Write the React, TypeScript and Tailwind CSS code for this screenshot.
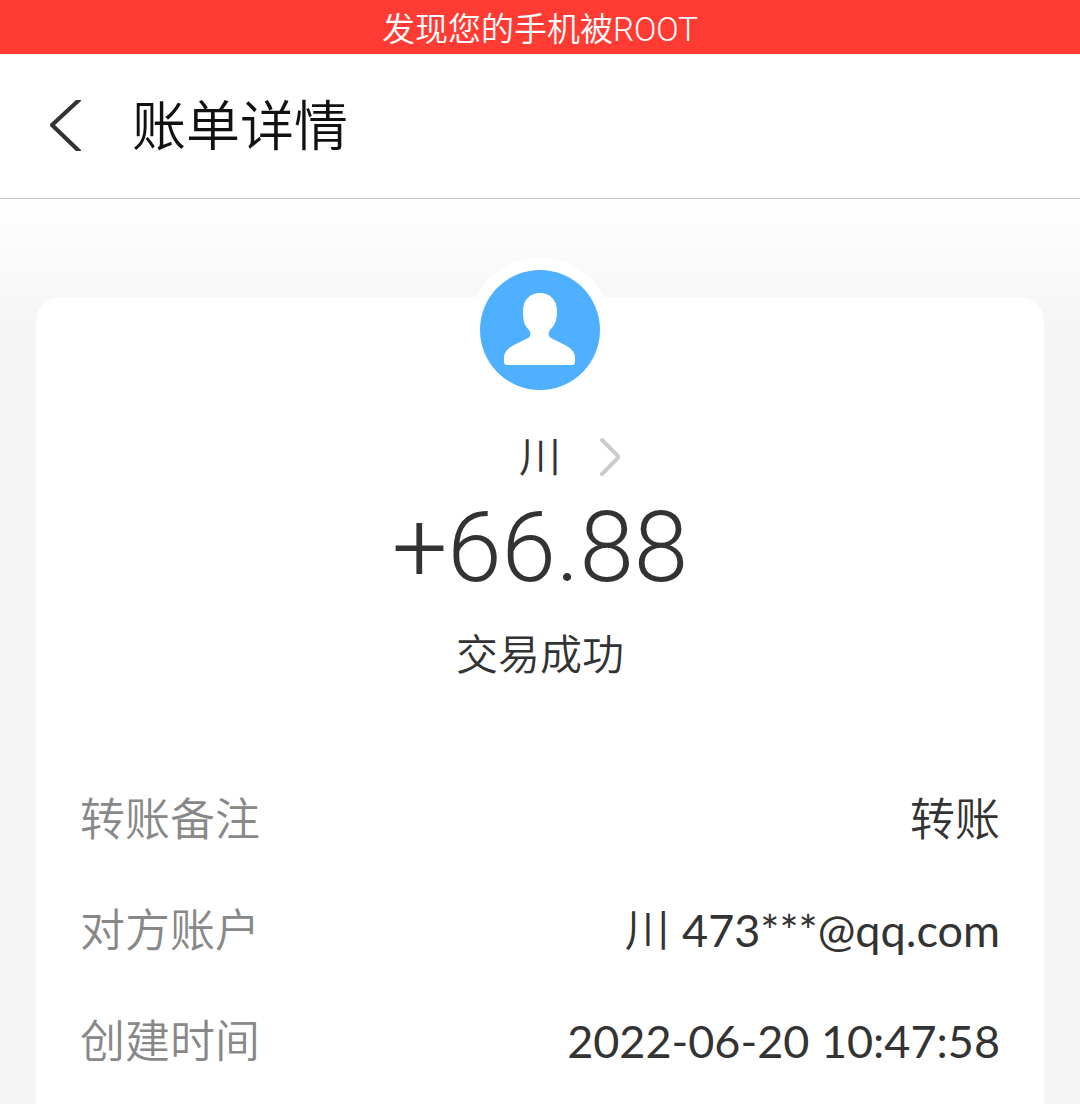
import type { ReactNode } from "react";

function DetailRow({ label, children }: { label: string; children: ReactNode }) {
  return (
    <div className="flex h-[111px] items-center justify-between">
      <dt className="text-[#888888]">{label}</dt>
      <dd className="text-[#333333]">{children}</dd>
    </div>
  );
}

export default function App() {
  return (
    <div className="flex min-h-screen flex-col bg-[#f5f5f5] font-['Roboto','Noto_Sans_CJK_SC',sans-serif] font-[350]">
      {/* Warning bar */}
      <div className="flex h-[54px] items-center justify-center bg-[#ff3b34] pt-1">
        <p className="text-[33px] leading-none text-white">发现您的手机被ROOT</p>
      </div>

      {/* Title bar */}
      <header className="flex h-[145px] items-center border-b border-[#c8c8c8] bg-white px-12">
        <button type="button" aria-label="返回">
          <svg width="36" height="56" viewBox="0 0 36 56">
            <path fill="#333333" d="M28 2h5v1L7 27l26 25v1h-5L2 28v-2z" />
          </svg>
        </button>
        <h1 className="ml-12 pt-1 text-[54px] leading-none text-[#111111]">账单详情</h1>
      </header>

      <main className="flex flex-1 flex-col bg-linear-to-b from-white to-[#f5f5f5] to-[130px] px-9 pt-[98px]">
        <section className="flex flex-1 flex-col items-center rounded-t-3xl bg-white px-11">
          {/* Avatar */}
          <div className="-mt-[39px] rounded-full bg-white p-3">
            <svg width="120" height="120" viewBox="0 0 120 120">
              <circle cx="60" cy="60" r="60" fill="#4eb0ff" />
              <path
                fill="#ffffff"
                d="M60 23c-10 0-17 7-17 18 0 9 1 14 6 19 2 3 2 6-1 8l-12 6c-8 4-12 8-12 13v4c0 3 1 4 3 4h65c2 0 3-1 3-4v-4c0-5-4-9-12-13l-12-6c-3-2-3-5-1-8 5-5 7-10 7-19 0-11-7-18-17-18z"
              />
            </svg>
          </div>

          <button type="button" className="mt-8 ml-[62px] flex items-center gap-9 text-[42px] leading-[48px] text-[#333333]">
            川
            <svg width="26" height="42" viewBox="0 0 26 42" fill="none" stroke="#cccccc" strokeWidth="4" strokeLinecap="round" strokeLinejoin="round">
              <path d="M5 3l15 15q2 2 0 4L5 37" />
            </svg>
          </button>
          <p className="mt-[14px] text-[98px] leading-[104px] text-[#333333]">+66.88</p>
          <p className="mt-8 text-[42px] leading-[48px] text-[#333333]">交易成功</p>

          {/* Details */}
          <dl className="mt-[84px] w-full font-['Lato','Noto_Sans_CJK_SC',sans-serif] text-[45px] leading-none">
            <DetailRow label="转账备注">转账</DetailRow>
            <DetailRow label="对方账户">
              川 <span className="font-normal">473***@qq.com</span>
            </DetailRow>
            <DetailRow label="创建时间">
              <span className="font-normal">2022-06-20 10:47:58</span>
            </DetailRow>
          </dl>
        </section>
      </main>
    </div>
  );
}
